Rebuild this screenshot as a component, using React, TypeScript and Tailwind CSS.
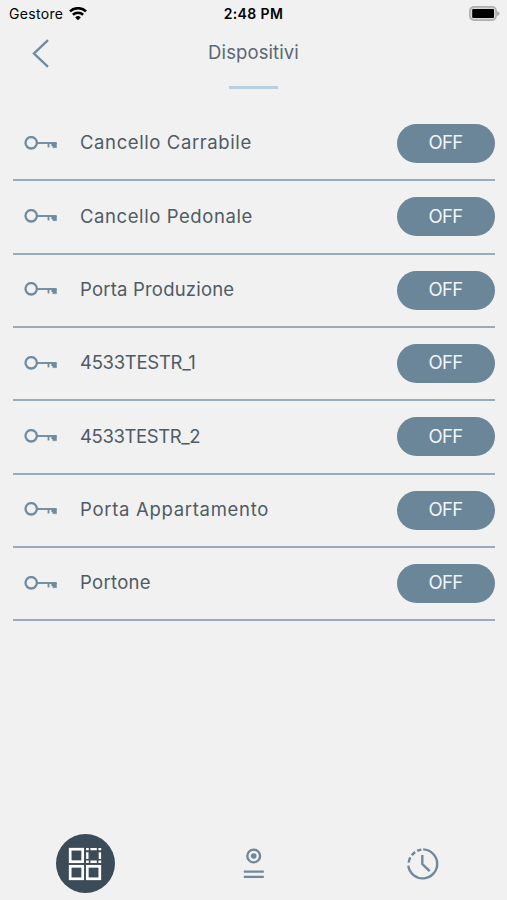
import clsx from 'clsx'

type Device = {
  name: string
  tracking: string
}

const devices: Device[] = [
  { name: 'Cancello Carrabile', tracking: 'tracking-[0.6px]' },
  { name: 'Cancello Pedonale', tracking: 'tracking-[0.58px]' },
  { name: 'Porta Produzione', tracking: 'tracking-[0.2px]' },
  { name: '4533TESTR_1', tracking: 'tracking-[-0.3px]' },
  { name: '4533TESTR_2', tracking: 'tracking-[-0.4px]' },
  { name: 'Porta Appartamento', tracking: 'tracking-[0.7px]' },
  { name: 'Portone', tracking: 'tracking-[0.3px]' },
]

function WifiIcon() {
  return (
    <svg className="ml-[6px] h-[14px] w-[18px]" viewBox="0 0 18 14" fill="none" stroke="#000" strokeWidth="2.6">
      <path d="M1 4.4a11.6 11.6 0 0 1 16 0" />
      <path d="M3.9 7.8a7.5 7.5 0 0 1 10.2 0" />
      <path d="M9 13.2 6.2 10.4a4.1 4.1 0 0 1 5.6 0Z" fill="#000" stroke="none" />
    </svg>
  )
}

function BatteryIcon() {
  return (
    <svg className="h-[15px] w-[31px]" viewBox="0 0 31 15">
      <rect x="0.9" y="0.9" width="26.2" height="13.2" rx="4" fill="#d8d8d8" stroke="#b0b0b0" strokeWidth="1.7" />
      <rect x="3.2" y="3" width="21.8" height="9" rx="1" fill="#000" />
      <path d="M28 5v5q2.7-1 2.7-2.5T28 5Z" fill="#b0b0b0" />
    </svg>
  )
}

function KeyIcon() {
  return (
    <svg className="mb-[2px] h-[14px] w-[33px]" viewBox="0 0 33 14" fill="none" stroke="#6f8c9f">
      <circle cx="7.2" cy="6.8" r="5.7" strokeWidth="2.3" />
      <path d="M13 7H32.6" strokeWidth="1.9" />
      <path d="M24.5 7v4.4" strokeWidth="1.8" />
      <path d="M27.6 7h5v4.7h-3.8V9.9h-1.2Z" fill="#6f8c9f" stroke="#6f8c9f" strokeWidth="0.4" />
    </svg>
  )
}

function GridIcon() {
  return (
    <svg className="h-[34px] w-[34px]" viewBox="0 0 34 34" fill="none" stroke="#fff" strokeWidth="2.7">
      <rect x="2.2" y="2.2" width="12.5" height="12.5" />
      <rect x="2.2" y="19.3" width="12.5" height="12.5" />
      <rect x="19.3" y="19.3" width="12.5" height="12.5" />
      <path
        d="M18 2.1h2.8M22.4 2.1h6.4M30.4 2.1h2.8M18 14.8h2.8M22.4 14.8h6.4M30.4 14.8h2.8M19.3 5.2v6.8M31.9 5.2v6.8"
        strokeWidth="2.4"
      />
    </svg>
  )
}

function ReaderIcon() {
  return (
    <svg className="h-[31px] w-[21px]" viewBox="0 0 21 31" fill="none" stroke="#6f899a" strokeWidth="2.4">
      <circle cx="10.7" cy="8" r="6.4" />
      <circle cx="10.7" cy="8" r="2.8" fill="#6f899a" stroke="none" />
      <path d="M.8 23.6h20M.8 28.9h20" />
    </svg>
  )
}

function HistoryIcon() {
  return (
    <svg className="h-[32px] w-[32px]" viewBox="0 0 32 32" fill="none" stroke="#6f899a" strokeWidth="2.4">
      <path d="M16.2 1.4A14.5 14.5 0 1 1 1.3 17.7" />
      <path d="M1.6 14.6Q2 11.7 3.4 9.4M4.8 7.3Q6.3 5.2 8.2 4.1M10.2 2.9Q12 2 14.4 1.6" />
      <path d="M15.3 7v9l7.4 7.2" />
    </svg>
  )
}

function StatusBar() {
  return (
    <div className="grid h-[27px] grid-cols-3 items-center text-black">
      <div className="flex items-center pl-[9px]">
        <span className="text-[14px] tracking-[0.32px]">Gestore</span>
        <WifiIcon />
      </div>
      <span className="text-center text-[14px] font-semibold tracking-[0.4px]">2:48 PM</span>
      <div className="flex justify-end pr-[7px]">
        <BatteryIcon />
      </div>
    </div>
  )
}

function DeviceRow({ name, tracking }: Device) {
  return (
    <li className="flex h-[73.33px] items-center border-b-2 border-[#9babb8] pl-[11px]">
      <KeyIcon />
      <span className={clsx('mb-px ml-[23px] flex-1 whitespace-nowrap text-[18.5px] text-[#4f5b64]', tracking)}>
        {name}
      </span>
      <button
        type="button"
        className="flex h-[39px] w-[98px] items-center justify-center rounded-full bg-[#6b8698] pr-px pb-px text-[18.5px] tracking-[-0.6px] text-[#f1f5f8]"
      >
        OFF
      </button>
    </li>
  )
}

export default function App() {
  return (
    <div className="flex h-[900px] w-full flex-col bg-[#f1f1f1] font-['Inter',sans-serif]">
      <StatusBar />
      <header className="grid h-[52px] grid-cols-3 items-center">
        <button type="button" aria-label="Indietro" className="ml-[32px] w-fit">
          <svg className="h-[29px] w-[17px]" viewBox="0 0 17 29" fill="none" stroke="#6f8c9f" strokeWidth="2.4">
            <path d="M16 1.2 2 14.5 16 27.8" />
          </svg>
        </button>
        <h1 className="text-center text-[18.5px] tracking-[0.1px] text-[#5b6871]">Dispositivi</h1>
      </header>
      <div className="mx-auto mt-[7px] h-[3px] w-[49px] bg-[#b8cfdf]" />
      <ul className="mt-[19px] flex-1 pr-3 pl-[13px]">
        {devices.map((device) => (
          <DeviceRow key={device.name} {...device} />
        ))}
      </ul>
      <nav className="grid h-[73px] grid-cols-3 justify-items-center">
        <button
          type="button"
          aria-label="Dispositivi"
          className="mt-[7px] ml-[2px] flex size-[59px] items-center justify-center rounded-full bg-[#3b4b57] pr-[2px]"
        >
          <GridIcon />
        </button>
        <button type="button" aria-label="Lettore" className="flex h-[73px] items-center">
          <ReaderIcon />
        </button>
        <button type="button" aria-label="Cronologia" className="flex h-[73px] items-center">
          <HistoryIcon />
        </button>
      </nav>
    </div>
  )
}
